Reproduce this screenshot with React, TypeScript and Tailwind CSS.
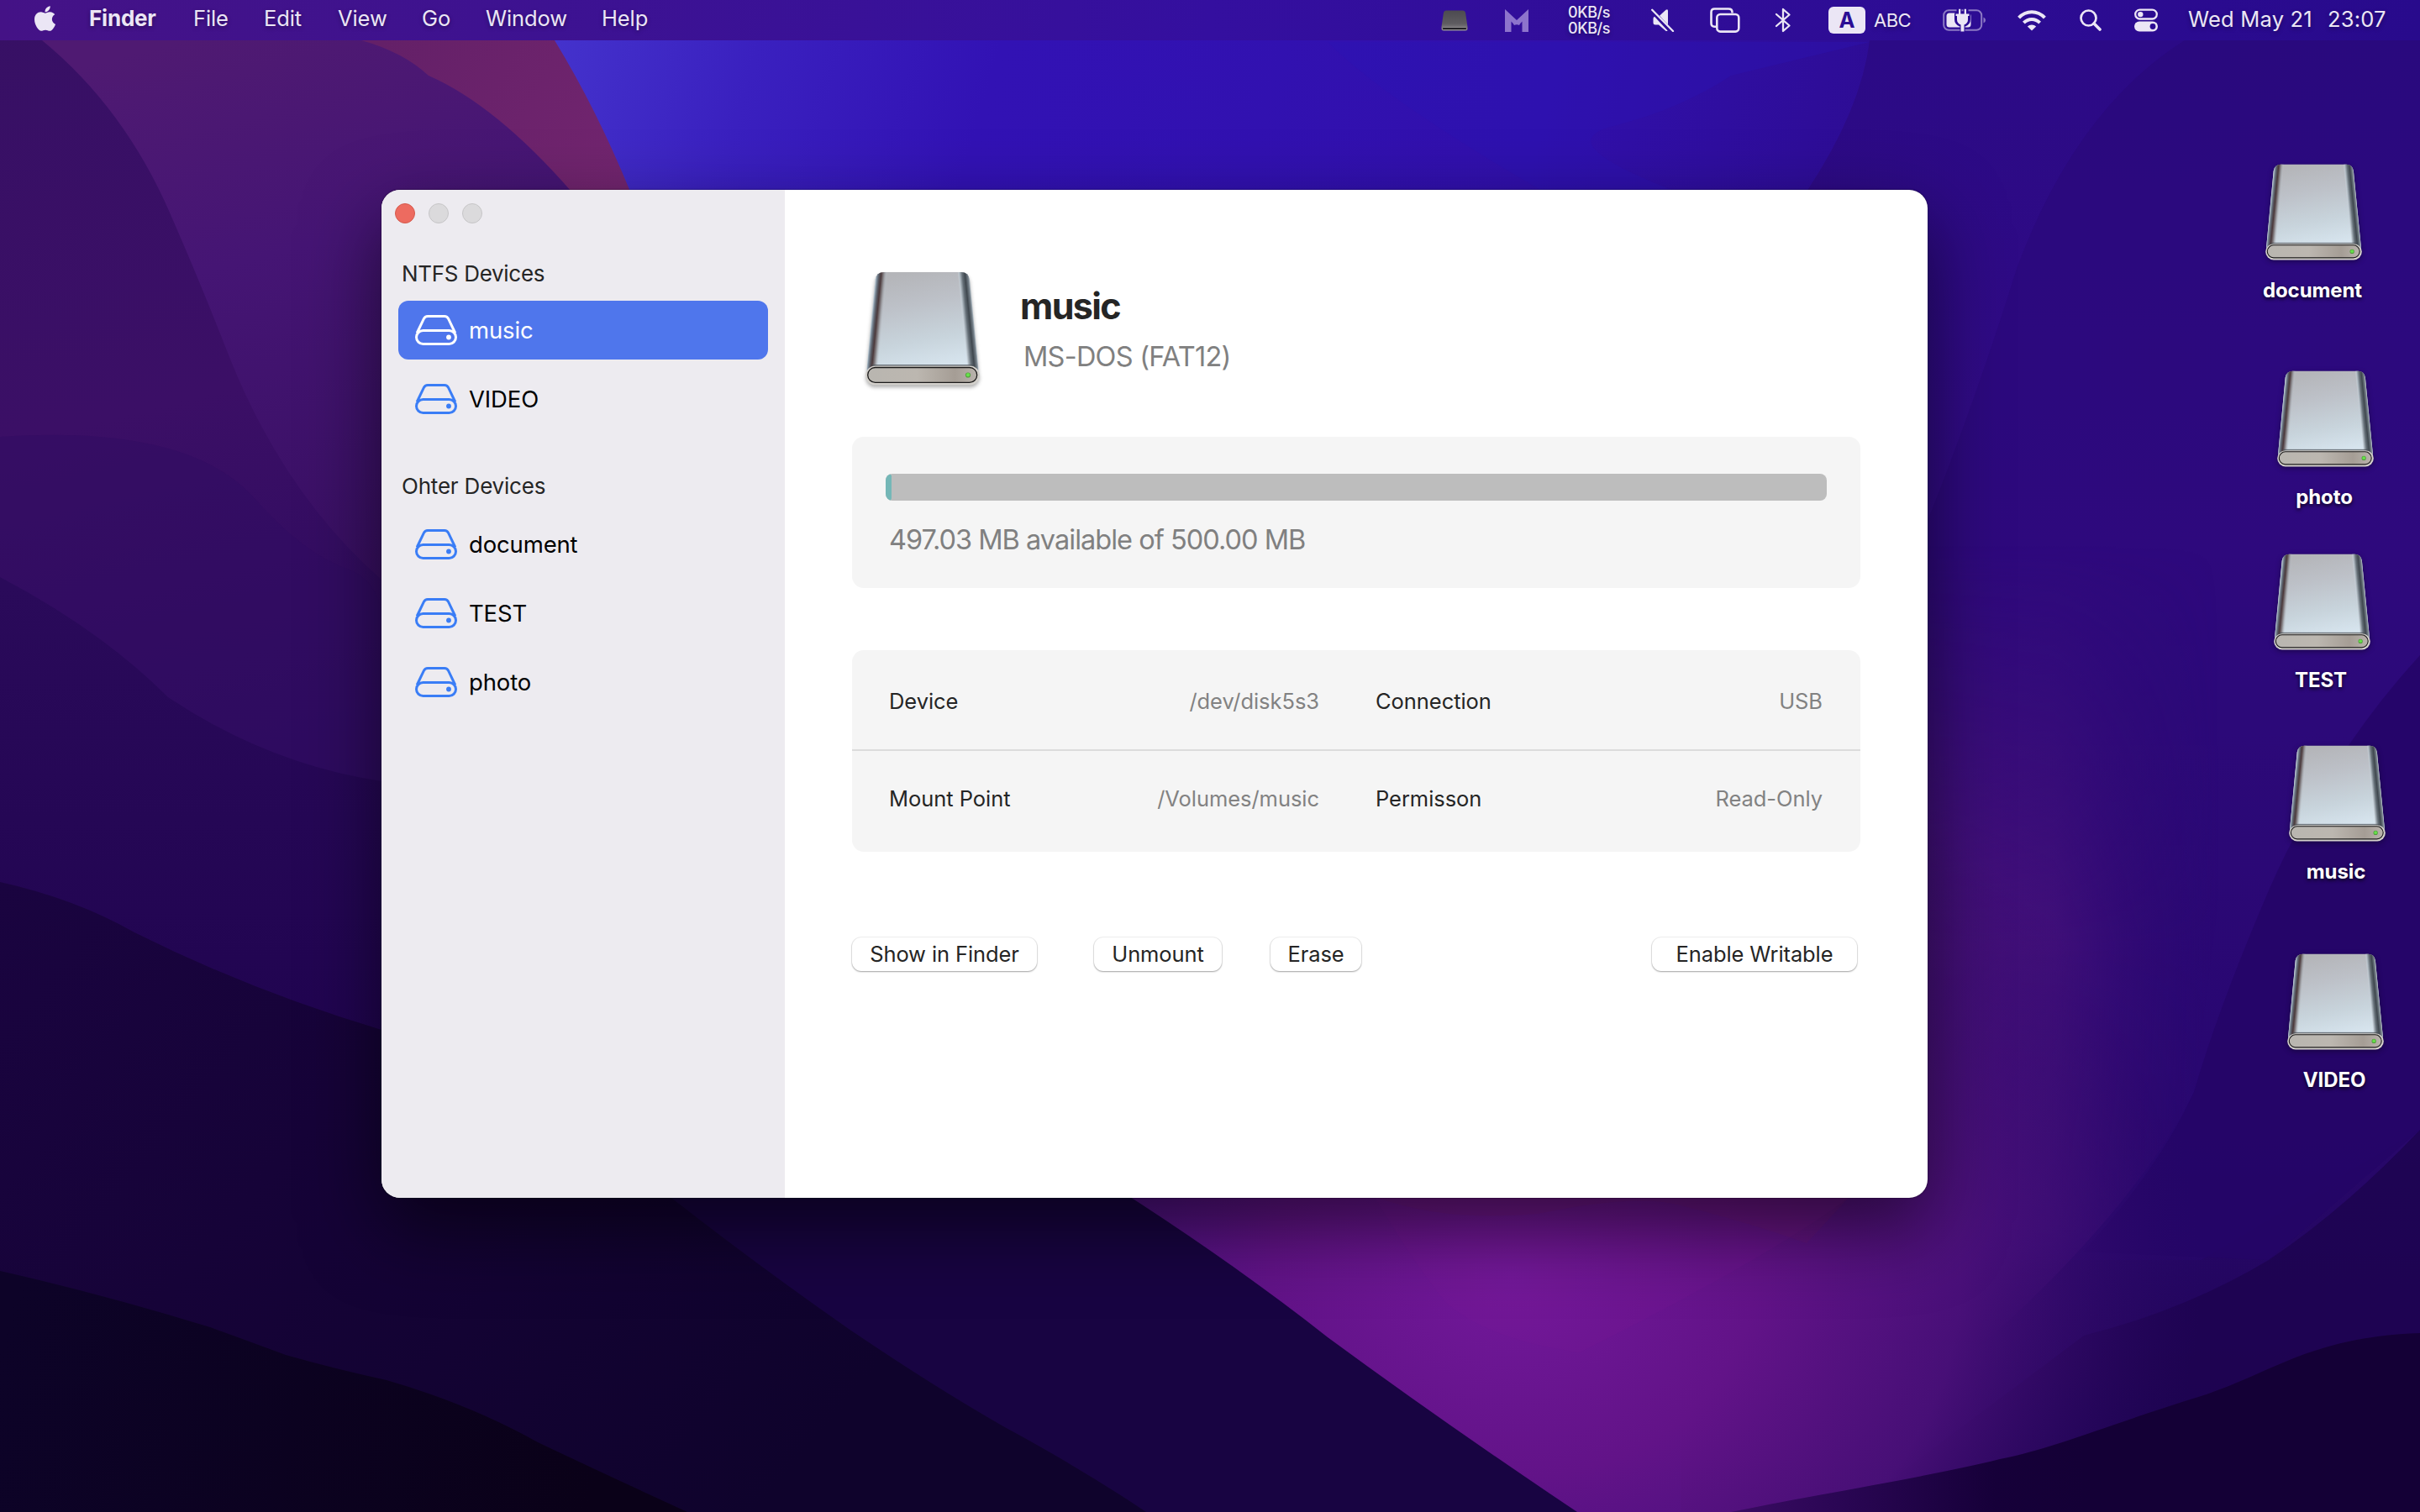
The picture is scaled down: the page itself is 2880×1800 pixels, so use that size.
import React from 'react';
import { FaApple } from 'react-icons/fa';

function Wallpaper() {
  return (
    <svg className="absolute inset-0 h-full w-full" viewBox="0 0 2880 1800" preserveAspectRatio="none">
      <defs>
        <linearGradient id="sky" gradientUnits="userSpaceOnUse" x1="660" y1="60" x2="2880" y2="700">
          <stop offset="0" stopColor="#4432cc" />
          <stop offset="0.1" stopColor="#3a20bf" />
          <stop offset="0.22" stopColor="#3212b4" />
          <stop offset="0.5" stopColor="#3110ac" />
          <stop offset="0.72" stopColor="#2c0b8c" />
          <stop offset="1" stopColor="#220768" />
        </linearGradient>
        <linearGradient id="rightFade" x1="0" y1="0" x2="0" y2="1">
          <stop offset="0" stopColor="#2b0a86" />
          <stop offset="0.35" stopColor="#320b84" />
          <stop offset="0.7" stopColor="#2a0870" />
          <stop offset="1" stopColor="#1d0450" />
        </linearGradient>
        <radialGradient id="glow" gradientUnits="userSpaceOnUse" cx="0" cy="0" r="1" gradientTransform="translate(1800 1520) scale(820 680)">
          <stop offset="0" stopColor="#72189a" />
          <stop offset="0.35" stopColor="#621388" />
          <stop offset="0.65" stopColor="#4e117c" stopOpacity="0.85" />
          <stop offset="1" stopColor="#2c0868" stopOpacity="0" />
        </radialGradient>
        <linearGradient id="sideGlow" gradientUnits="userSpaceOnUse" x1="2250" y1="0" x2="2640" y2="0">
          <stop offset="0" stopColor="#4e147c" />
          <stop offset="0.5" stopColor="#45117a" stopOpacity="0.8" />
          <stop offset="1" stopColor="#2c0870" stopOpacity="0" />
        </linearGradient>
        <linearGradient id="sideMaskFill" gradientUnits="userSpaceOnUse" x1="0" y1="650" x2="0" y2="1600">
          <stop offset="0" stopColor="#000" />
          <stop offset="0.5" stopColor="#fff" />
          <stop offset="0.85" stopColor="#bbb" />
          <stop offset="1" stopColor="#000" />
        </linearGradient>
        <mask id="sideMask" maskUnits="userSpaceOnUse" x="0" y="0" width="2880" height="1800">
          <rect width="2880" height="1800" fill="url(#sideMaskFill)" />
        </mask>
        <linearGradient id="leftA" gradientUnits="userSpaceOnUse" x1="0" y1="0" x2="250" y2="1000">
          <stop offset="0" stopColor="#371065" />
          <stop offset="0.5" stopColor="#3b0f66" />
          <stop offset="1" stopColor="#2a0a5c" />
        </linearGradient>
        <linearGradient id="leftB" gradientUnits="userSpaceOnUse" x1="250" y1="40" x2="420" y2="700">
          <stop offset="0" stopColor="#4f1a72" />
          <stop offset="0.4" stopColor="#451574" />
          <stop offset="1" stopColor="#380f62" />
        </linearGradient>
        <linearGradient id="maroon" gradientUnits="userSpaceOnUse" x1="450" y1="60" x2="740" y2="220">
          <stop offset="0" stopColor="#642068" />
          <stop offset="1" stopColor="#72256f" />
        </linearGradient>
        <linearGradient id="low1" gradientUnits="userSpaceOnUse" x1="100" y1="700" x2="100" y2="1250">
          <stop offset="0" stopColor="#2a0a5a" />
          <stop offset="1" stopColor="#200450" />
        </linearGradient>
        <linearGradient id="low2" gradientUnits="userSpaceOnUse" x1="0" y1="1050" x2="900" y2="1800">
          <stop offset="0" stopColor="#1a0440" />
          <stop offset="0.4" stopColor="#160338" />
          <stop offset="1" stopColor="#0f032c" />
        </linearGradient>
        <linearGradient id="black" gradientUnits="userSpaceOnUse" x1="0" y1="1600" x2="700" y2="1800">
          <stop offset="0" stopColor="#0d0328" />
          <stop offset="1" stopColor="#0a0118" />
        </linearGradient>
        <linearGradient id="corner" gradientUnits="userSpaceOnUse" x1="1950" y1="1800" x2="2480" y2="1800">
          <stop offset="0" stopColor="#48106f" />
          <stop offset="0.45" stopColor="#2a0654" />
          <stop offset="0.8" stopColor="#160039" />
          <stop offset="1" stopColor="#140036" />
        </linearGradient>
      </defs>
      <rect width="2880" height="1800" fill="url(#sky)" />
      <path d="M1580 50 Q1650 120 1840 230 L2000 230 Q1840 170 1920 150 Q2000 130 2060 90 L2225 50Z" fill="#2b14b4" opacity="0.35" />
      <path d="M2225 48 Q2215 130 2150 228 L2000 700 V1800 H2880 V48Z" fill="url(#rightFade)" />
      <path d="M2600 48 Q2470 130 2400 320 Q2350 480 2294 620 V1500 H2620 L2880 1345 V48Z" fill="#280874" opacity="0.4" />
      <path d="M2880 1345 V780 Q2770 900 2700 1060 Q2640 1200 2611 1300 Q2570 1390 2480 1490 L2700 1500Z" fill="#240566" opacity="0.8" />
      <path d="M2000 600 L2700 600 L2611 1300 Q2540 1440 2360 1600 L2000 1700Z" fill="url(#sideGlow)" mask="url(#sideMask)" />
      <path d="M2880 1345 Q2790 1440 2700 1500 Q2600 1560 2480 1590 L2200 1800 H2880Z" fill="#1d0450" opacity="0.85" />
      <rect x="900" y="800" width="1760" height="1000" fill="url(#glow)" />
      <path d="M1633 1420 Q1680 1500 1720 1550 Q1770 1595 1880 1610 Q2100 1500 2200 1426Z" fill="#7a1896" opacity="0.16" />
      <path d="M1640 1426 Q1720 1455 1830 1445 Q1950 1420 2000 1435 Q2080 1455 2150 1480 L2200 1426Z" fill="#7a1c68" opacity="0.18" />
      <path d="M2880 1587 C2740 1592 2700 1640 2600 1668 C2500 1700 2440 1725 2380 1737 C2300 1757 2200 1772 2060 1800 H2880Z" fill="url(#corner)" />
      <path d="M0 48 H660 Q710 130 750 228 L1000 1000 H0Z" fill="url(#maroon)" />
      <path d="M0 48 H430 Q480 62 510 90 Q590 125 680 228 L800 800 L400 800 L0 700Z" fill="url(#leftB)" />
      <path d="M0 48 H50 Q150 130 205 260 Q240 340 275 430 Q340 590 454 690 V1000 H0Z" fill="url(#leftA)" />
      <path d="M0 520 Q220 505 300 590 Q360 660 420 680 Q460 700 454 760 V1000 H0Z" fill="#2f0c62" opacity="0.5" />
      <path d="M0 687 Q120 750 200 830 Q320 910 454 930 L1140 1300 V1800 H0Z" fill="url(#low1)" />
      <path d="M600 1300 L1140 1300 Q1400 1450 1580 1592 Q1720 1695 1877 1800 H600Z" fill="#180442" />
      <path d="M0 1050 Q90 1070 160 1110 Q300 1180 454 1226 L700 1340 Q760 1390 799 1426 Q900 1505 1010 1582 Q1110 1650 1194 1698 Q1290 1750 1364 1800 H0Z" fill="url(#low2)" />
      <path d="M0 1513 Q120 1540 250 1580 Q300 1598 340 1613 Q400 1630 460 1643 Q560 1672 640 1717 Q720 1755 818 1800 H0Z" fill="url(#black)" />
    </svg>
  );
}

/* Silver external disk with a rounded front panel and a green status light */
function Disk({ className }: { className: string }) {
  return (
    <svg viewBox="0 0 136 136" className={className}>
      <defs>
        <linearGradient id="dTop" x1="0.4" y1="0" x2="0.6" y2="1">
          <stop offset="0" stopColor="#b4b5b9" />
          <stop offset="0.3" stopColor="#bdc1c8" />
          <stop offset="0.65" stopColor="#c8d4dc" />
          <stop offset="1" stopColor="#dbe9f3" />
        </linearGradient>
        <linearGradient id="dLeft" gradientUnits="userSpaceOnUse" x1="1" y1="115" x2="15" y2="116.4">
          <stop offset="0" stopColor="#d0dde6" />
          <stop offset="0.14" stopColor="#7d8d9b" />
          <stop offset="0.3" stopColor="#55565f" />
          <stop offset="0.46" stopColor="#4c3a3c" />
          <stop offset="0.7" stopColor="#908f93" />
          <stop offset="1" stopColor="#c4ccd4" stopOpacity="0" />
        </linearGradient>
        <linearGradient id="dRight" gradientUnits="userSpaceOnUse" x1="135" y1="115" x2="121" y2="116.4">
          <stop offset="0" stopColor="#c8d4dc" />
          <stop offset="0.15" stopColor="#747f88" />
          <stop offset="0.38" stopColor="#3f474e" />
          <stop offset="0.62" stopColor="#656f77" />
          <stop offset="0.85" stopColor="#b3bdc5" />
          <stop offset="1" stopColor="#d6e0e8" stopOpacity="0" />
        </linearGradient>
        <linearGradient id="dFront" x1="0" y1="0" x2="1" y2="0">
          <stop offset="0" stopColor="#b9b6b0" />
          <stop offset="0.45" stopColor="#bcb7b0" />
          <stop offset="0.8" stopColor="#a59d95" />
          <stop offset="1" stopColor="#b9b3ac" />
        </linearGradient>
      </defs>
      <path d="M11.5 10 Q13 1 22 1 H114 Q122.500 1 124 10 L134.500 116 Q135 125 125 125 H11 Q1 125 1.500 116Z" fill="url(#dTop)" />
      <path d="M11.5 10 Q13 1 22 1 H28 L18 125 H11 Q1 125 1.500 116Z" fill="url(#dLeft)" />
      <path d="M108 1 H114 Q122.500 1 124 10 L134.500 116 Q135 125 125 125 H118Z" fill="url(#dRight)" />
      <rect x="8" y="111" width="120" height="2.500" fill="#4b5258" opacity="0.75" />
      <rect x="0.2" y="112.500" width="135.600" height="22.800" rx="11.400" fill="#d3d0cb" />
      <rect x="2.700" y="114.500" width="130" height="17.800" rx="8.900" fill="url(#dFront)" stroke="#1b1a1a" strokeWidth="1.300" />
      <circle cx="122" cy="123.500" r="3.100" fill="#4f9a3b" />
      <circle cx="122" cy="123.200" r="2.200" fill="#66e04a" />
    </svg>
  );
}

function DriveGlyph({ className }: { className: string }) {
  return (
    <svg viewBox="0 0 50 36" className={className} fill="none" stroke="currentColor" strokeWidth="3">
      <path d="M2.200 21.500 L10.300 4.600 Q11.800 1.500 15 1.500 H35 Q38.200 1.500 39.700 4.600 L47.800 21.500" />
      <rect x="1.500" y="18.500" width="47" height="16" rx="8" />
      <circle cx="40" cy="26.500" r="2.900" fill="currentColor" stroke="none" />
    </svg>
  );
}

function MenuBar() {
  return (
    <header className="relative flex h-12 items-center bg-linear-to-r from-[#441286] via-[#340f9f] to-[#280a8c] text-[25.5px] leading-[32px] text-[#ebe6f5] [text-shadow:0_2px_5px_rgba(0,0,0,0.35)]">
      <FaApple className="ml-[37px] h-[34px] w-[33px] -translate-y-[2px]" />
      <nav className="ml-[36px] flex h-[34px] -translate-y-px whitespace-nowrap tracking-[-0.1px]">
        <span className="w-[124px] text-[26px] font-bold tracking-[-0.2px]">Finder</span>
        <span className="w-[84px]">File</span>
        <span className="w-[88px]">Edit</span>
        <span className="w-[100px]">View</span>
        <span className="w-[76px]">Go</span>
        <span className="w-[138px]">Window</span>
        <span>Help</span>
      </nav>

      <div className="ml-auto flex h-12 items-center pr-[39px]">
        <svg viewBox="0 0 32 25" className="h-[25px] w-8">
          <defs>
            <linearGradient id="miniDrive" x1="0" y1="0" x2="0" y2="1">
              <stop offset="0" stopColor="#4c4a50" />
              <stop offset="0.65" stopColor="#5e5c60" />
              <stop offset="1" stopColor="#8e8c8e" />
            </linearGradient>
          </defs>
          <path d="M6 .5H26Q28.500.5 29 3L31.500 20V22Q31.500 24.500 29 24.500H3Q.5 24.500.5 22V20L3 3Q3.500.5 6 .5Z" fill="url(#miniDrive)" />
          <rect x="1.500" y="20.500" width="29" height="3" rx="1.300" fill="#222126" stroke="#9d9a9d" strokeWidth=".8" />
        </svg>
        <svg viewBox="0 0 28 27" className="ml-[44px] h-[27px] w-7" fill="#8d74cc">
          <path d="M0 0 L14 13 L28 0 V27 H20.500 V14.500 Q18 17 17 19 Q14 17.500 11 19 Q10 17 7.500 14.500 V27 H0Z" />
        </svg>
        <div className="ml-[47px] w-[53px] whitespace-nowrap text-[18px] leading-[19px] font-medium tracking-[-0.4px]">
          <div>0KB/s</div>
          <div>0KB/s</div>
        </div>
        <svg viewBox="0 0 28 28" className="ml-[46px] h-7 w-7" fill="currentColor">
          <path d="M10 8.800 L17.500 1.800 Q20 0 20 3 V19.500Z" />
          <path d="M4 9.800 Q2.500 10.500 2.500 12 V17 Q2.500 19.500 5 19.500 H9 L17 26.500 Q18.600 27.600 19.600 26.400Z" />
          <path d="M1.200 1.800 L26 27" stroke="currentColor" strokeWidth="2.300" strokeLinecap="round" />
        </svg>
        <svg viewBox="0 0 36 30" className="ml-[42px] h-[30px] w-9" fill="none" stroke="currentColor" strokeWidth="2.600">
          <path d="M7 22.700 H5.300 Q1.500 22.700 1.500 18.700 V5.500 Q1.500 1.500 5.500 1.500 H22 Q26.500 1.500 26.500 5.500 V6.500" />
          <rect x="8.300" y="8" width="26" height="20.600" rx="4" />
        </svg>
        <svg viewBox="0 0 20 30" className="ml-[41px] h-[30px] w-5" fill="none" stroke="currentColor" strokeWidth="2.300" strokeLinejoin="round" strokeLinecap="round">
          <path d="M2 8 L17.500 21.500 L10 28 V2 L17.500 8.500 L2 22" />
        </svg>
        <div className="ml-[44px] flex h-8 w-11 items-center justify-center rounded-[6px] bg-[#ebe6f5] font-bold text-[#2b0d94] [text-shadow:none]">A</div>
        <span className="ml-[10px] w-[46px] text-[22px] tracking-[-0.5px]">ABC</span>
        <svg viewBox="0 0 52 30" className="ml-[36px] h-[30px] w-[52px]">
          <rect x="1.200" y="3.200" width="45" height="23.600" rx="6" fill="none" stroke="currentColor" strokeOpacity=".5" strokeWidth="2" />
          <path d="M48.500 11.500 Q51 12.500 51 15 Q51 17.500 48.500 18.500Z" fill="currentColor" opacity=".5" />
          <rect x="4.500" y="6.400" width="29" height="17.200" rx="3.500" fill="currentColor" />
          <path d="M19.500 2 V8 M27.500 2 V8 M14.500 8.500 H32.500 M23.500 18 V28.500" stroke="#2b0b94" strokeWidth="6" fill="none" />
          <path d="M14 7 H33 V14 Q33 20 27 22.500 H20 Q14 20 14 14Z" fill="#2b0b94" />
          <path d="M19 1.800 H21.300 V7.500 H25.700 V1.800 H28 V7.500 H31.500 V10 H30 V14.500 Q30 18.500 25.500 20.500 V28.500 H21.500 V20.500 Q17 18.500 17 14.500 V10 H15.500 V7.500 H19Z" fill="currentColor" />
        </svg>
        <svg viewBox="0 0 34 26" className="ml-[37px] h-[26px] w-[34px]" fill="none" stroke="currentColor" strokeWidth="4">
          <path d="M1.600 10.200 Q8 3.200 17 3.200 Q26 3.200 32.400 10.200" />
          <path d="M7.400 16.200 Q11.500 12 17 12 Q22.500 12 26.600 16.200" />
          <path d="M17 25.500 L11.800 20.600 Q14 18.500 17 18.500 Q20 18.500 22.200 20.600Z" fill="currentColor" stroke="none" />
        </svg>
        <svg viewBox="0 0 26 26" className="ml-[40px] h-[26px] w-[26px]" fill="none" stroke="currentColor" strokeWidth="2.700">
          <circle cx="10.500" cy="10.500" r="9" />
          <path d="M17 17 L24 24" strokeWidth="3.600" strokeLinecap="round" />
        </svg>
        <svg viewBox="0 0 28 28" className="ml-[39px] h-7 w-7">
          <rect x="1.200" y="1.700" width="25.600" height="10.800" rx="5.400" fill="none" stroke="currentColor" strokeWidth="2.300" />
          <circle cx="7.300" cy="7.100" r="3.200" fill="currentColor" />
          <rect x="0" y="15.500" width="28" height="12" rx="6" fill="currentColor" />
          <circle cx="22" cy="21.500" r="3.400" fill="#2a0b92" />
        </svg>
        <span className="ml-[36px] w-[166px] -translate-y-px whitespace-nowrap tracking-[0.2px]">Wed May 21</span>
        <span className="w-[71px] -translate-y-px whitespace-nowrap tracking-[0.2px]">23:07</span>
      </div>
    </header>
  );
}

function DeviceRow({ name, selected = false }: { name: string; selected?: boolean }) {
  return (
    <li className={selected ? 'flex h-[70px] items-center rounded-[12px] bg-[#4f76ec] pl-5 text-white' : 'flex h-[70px] items-center pl-5 text-black'}>
      <DriveGlyph className={selected ? 'h-9 w-[50px] text-white' : 'h-9 w-[50px] text-[#3a7df6]'} />
      <span className="ml-[14px] text-[27.5px] leading-[32px] tracking-[-0.15px]">{name}</span>
    </li>
  );
}

function Field({ label, value }: { label: string; value: string }) {
  return (
    <div className="flex justify-between">
      <span className="text-[#252525]">{label}</span>
      <span className="text-[#828282]">{value}</span>
    </div>
  );
}

function PushButton({ label, className }: { label: string; className: string }) {
  return (
    <button className={'h-10 rounded-[11px] bg-white pb-px text-[25.5px] leading-[37px] tracking-[-0.1px] whitespace-nowrap text-[#252525] shadow-[0_0_0_1px_rgba(0,0,0,0.06),0_1px_2px_rgba(0,0,0,0.32)] ' + className}>
      {label}
    </button>
  );
}

function DeviceWindow() {
  return (
    <main className="absolute top-[226px] left-[454px] flex h-[1200px] w-[1840px] overflow-hidden rounded-[22px] bg-white shadow-[0_0_2px_rgba(0,0,0,0.6),0_36px_90px_rgba(0,0,0,0.55)]">
      <aside className="w-[480px] bg-[#edebf0] px-5">
        <div className="-ml-1 flex gap-4 pt-4">
          <span className="h-6 w-6 rounded-full border border-[#d55a4d] bg-[#ed6b60]" />
          <span className="h-6 w-6 rounded-full border border-[#c6c5c7] bg-[#dbdadc]" />
          <span className="h-6 w-6 rounded-full border border-[#c6c5c7] bg-[#dbdadc]" />
        </div>
        <h2 className="mt-[44px] ml-[4px] text-[26px] leading-[32px] tracking-[-0.3px] text-[#252525]">NTFS Devices</h2>
        <ul className="mt-[16px] flex flex-col gap-3">
          <DeviceRow name="music" selected />
          <DeviceRow name="VIDEO" />
        </ul>
        <h2 className="mt-[53px] ml-[4px] text-[26px] leading-[32px] tracking-[-0.2px] text-[#252525]">Ohter Devices</h2>
        <ul className="mt-[18px] flex flex-col gap-3">
          <DeviceRow name="document" />
          <DeviceRow name="TEST" />
          <DeviceRow name="photo" />
        </ul>
      </aside>

      <section className="flex-1 px-20 pt-[97px]">
        <div className="flex h-[197px] pl-4">
          <Disk className="h-[136px] w-[136px] drop-shadow-[0_3px_2px_rgba(0,0,0,0.3)]" />
          <div className="ml-[48px] pt-[15px]">
            <h1 className="text-[43px] leading-[52px] font-bold tracking-[-1.6px] text-[#252525]">music</h1>
            <p className="mt-[15px] ml-[4px] text-[32.5px] leading-[40px] tracking-[-0.75px] text-[#808080]">MS-DOS (FAT12)</p>
          </div>
        </div>

        <div className="h-[180px] rounded-[14px] bg-[#f5f5f5] px-10 pt-11">
          <div className="h-8 overflow-hidden rounded-[8px] bg-[#bdbdbd]">
            <div className="h-8 w-[7px] rounded-full bg-[#74b7b7]" />
          </div>
          <p className="mt-[27px] ml-[4px] text-[32.5px] leading-[40px] tracking-[-0.98px] text-[#808080]">497.03 MB available of 500.00 MB</p>
        </div>

        <div className="mt-[74px] h-[240px] rounded-[14px] bg-[#f5f5f5] text-[25.5px] leading-[32px] tracking-[-0.05px]">
          <div className="grid h-[118px] grid-cols-[512px_532px] gap-x-[67px] pt-[45px] pl-[44px]">
            <Field label="Device" value="/dev/disk5s3" />
            <Field label="Connection" value="USB" />
          </div>
          <div className="h-[2px] bg-[#dcdcdc]" />
          <div className="grid grid-cols-[512px_532px] gap-x-[67px] pt-[41px] pl-[44px]">
            <Field label="Mount Point" value="/Volumes/music" />
            <Field label="Permisson" value="Read-Only" />
          </div>
        </div>

        <div className="mt-[102px] flex">
          <PushButton label="Show in Finder" className="w-[220px]" />
          <PushButton label="Unmount" className="ml-[68px] w-[152px]" />
          <PushButton label="Erase" className="ml-[58px] w-[108px]" />
          <PushButton label="Enable Writable" className="ml-auto mr-[4px] w-[244px]" />
        </div>
      </section>
    </main>
  );
}

function Volume({ name, className }: { name: string; className: string }) {
  return (
    <div className={'absolute flex w-[160px] flex-col items-center ' + className}>
      <Disk className="ml-[3px] h-[115px] w-[115px] drop-shadow-[0_2px_3px_rgba(0,0,0,0.35)]" />
      <span className="mt-[20px] text-[24px] leading-[32px] font-bold tracking-[-0.1px] text-white [text-shadow:0_2px_4px_rgba(0,0,0,0.8)]">{name}</span>
    </div>
  );
}

export default function App() {
  return (
    <div className="relative h-[1800px] w-[2880px] overflow-hidden bg-[#2c0b8c] font-['Inter',sans-serif]">
      <Wallpaper />
      <MenuBar />
      <DeviceWindow />
      <Volume name="document" className="top-[195px] left-[2672px]" />
      <Volume name="photo" className="top-[441px] left-[2686px]" />
      <Volume name="TEST" className="top-[659px] left-[2682px]" />
      <Volume name="music" className="top-[887px] left-[2700px]" />
      <Volume name="VIDEO" className="top-[1135px] left-[2698px]" />
    </div>
  );
}
